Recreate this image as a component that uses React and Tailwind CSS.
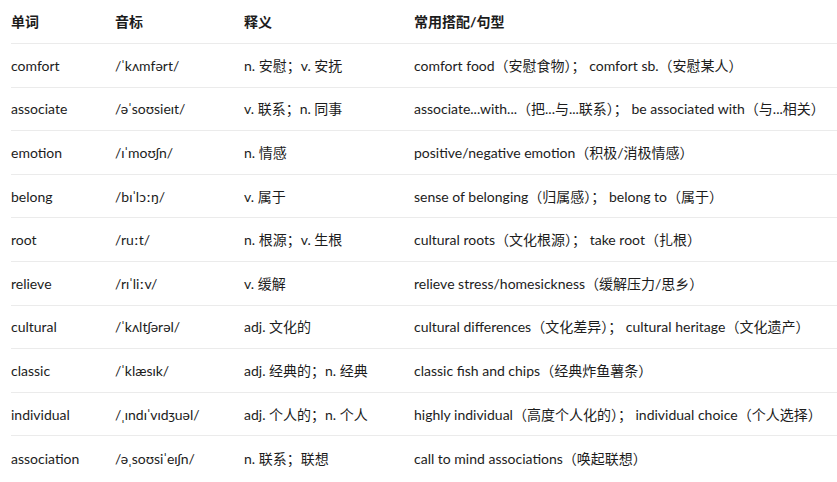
const rows = [
  ["comfort", "/ˈkʌmfərt/", "n. 安慰；v. 安抚", "comfort food（安慰食物）； comfort sb.（安慰某人）"],
  ["associate", "/əˈsoʊsieɪt/", "v. 联系；n. 同事", "associate...with...（把...与...联系）； be associated with（与...相关）"],
  ["emotion", "/ɪˈmoʊʃn/", "n. 情感", "positive/negative emotion（积极/消极情感）"],
  ["belong", "/bɪˈlɔːŋ/", "v. 属于", "sense of belonging（归属感）； belong to（属于）"],
  ["root", "/ruːt/", "n. 根源；v. 生根", "cultural roots（文化根源）； take root（扎根）"],
  ["relieve", "/rɪˈliːv/", "v. 缓解", "relieve stress/homesickness（缓解压力/思乡）"],
  ["cultural", "/ˈkʌltʃərəl/", "adj. 文化的", "cultural differences（文化差异）； cultural heritage（文化遗产）"],
  ["classic", "/ˈklæsɪk/", "adj. 经典的；n. 经典", "classic fish and chips（经典炸鱼薯条）"],
  ["individual", "/ˌɪndɪˈvɪdʒuəl/", "adj. 个人的；n. 个人", "highly individual（高度个人化的）； individual choice（个人选择）"],
  ["association", "/əˌsoʊsiˈeɪʃn/", "n. 联系；联想", "call to mind associations（唤起联想）"],
]

const cols = "grid grid-cols-[104px_129px_170px_1fr] items-center"

export default function App() {
  return (
    <div
      className="min-h-screen bg-white pl-[11px] text-[14px] text-[#1c1c1c]"
      style={{ fontFamily: 'Lato, "Noto Sans CJK SC", sans-serif' }}
    >
      {/* Header */}
      <div className={`${cols} h-[44px] border-b border-[#ebebeb] font-bold`}>
        <div>单词</div>
        <div>音标</div>
        <div>释义</div>
        <div>常用搭配/句型</div>
      </div>

      {rows.map((r, i) => (
        <div
          key={r[0]}
          className={`${cols} h-[43.6px] ${i < rows.length - 1 ? "border-b border-[#ebebeb]" : ""}`}
        >
          <div>{r[0]}</div>
          <div>{r[1]}</div>
          <div>{r[2]}</div>
          <div className="whitespace-nowrap">{r[3]}</div>
        </div>
      ))}
    </div>
  )
}
